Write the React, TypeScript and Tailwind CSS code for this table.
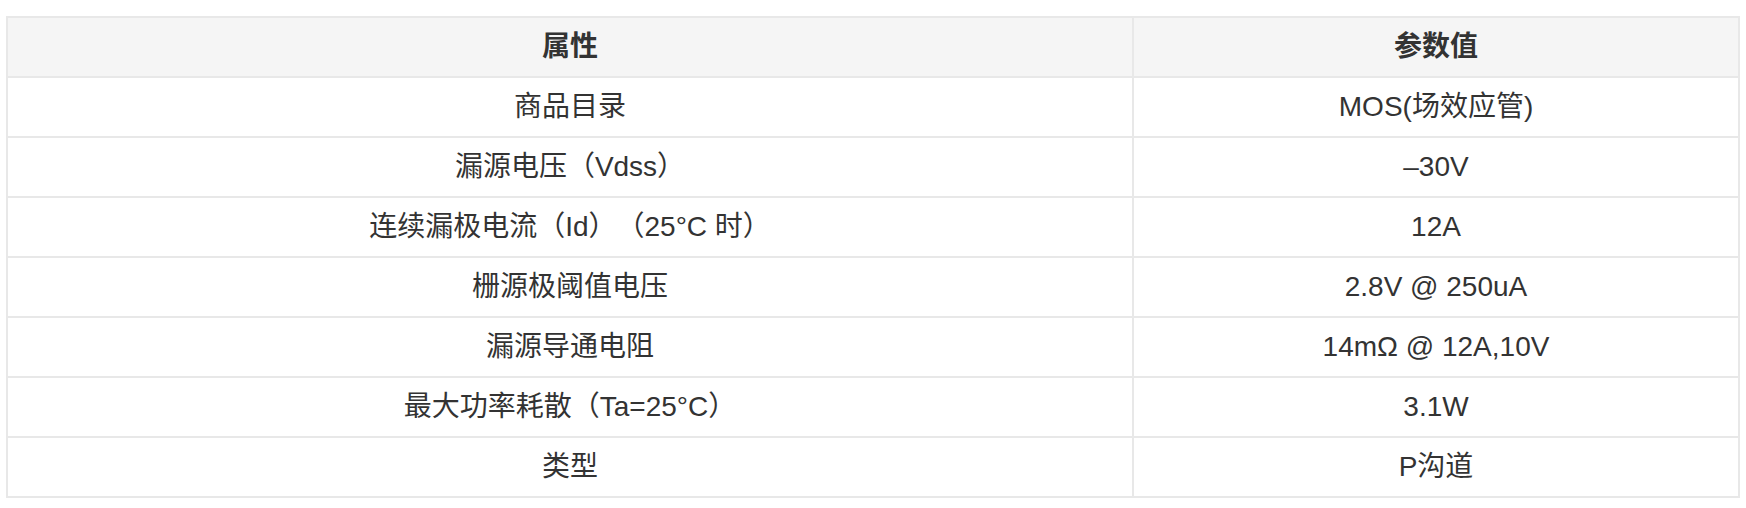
const rows: [string, string][] = [
  ['商品目录', 'MOS(场效应管)'],
  ['漏源电压（Vdss）', '–30V'],
  ['连续漏极电流（Id）（25°C 时）', '12A'],
  ['栅源极阈值电压', '2.8V @ 250uA'],
  ['漏源导通电阻', '14mΩ @ 12A,10V'],
  ['最大功率耗散（Ta=25°C）', '3.1W'],
  ['类型', 'P沟道'],
];

export default function App() {
  return (
    <div
      className="w-[1746px] h-[508px] overflow-hidden bg-white pt-[16px] pl-[6px] [text-spacing-trim:space-all]"
      style={{ fontFamily: '"Liberation Sans", "Noto Sans CJK SC", sans-serif' }}
    >
      <table className="w-[1734px] border-collapse border-2 border-[#e8e8e8] text-[28px] text-[#333333] table-fixed">
        <colgroup>
          <col className="w-[1126px]" />
          <col />
        </colgroup>
        <thead>
          <tr className="h-[60px] bg-[#f5f5f5]">
            <th className="border-2 border-[#e8e8e8] font-bold text-center p-0">属性</th>
            <th className="border-2 border-[#e8e8e8] font-bold text-center p-0">参数值</th>
          </tr>
        </thead>
        <tbody>
          {rows.map(([k, v]) => (
            <tr key={k} className="h-[60px]">
              <td className="border-2 border-[#e8e8e8] text-center p-0">{k}</td>
              <td className="border-2 border-[#e8e8e8] text-center p-0">{v}</td>
            </tr>
          ))}
        </tbody>
      </table>
    </div>
  );
}
